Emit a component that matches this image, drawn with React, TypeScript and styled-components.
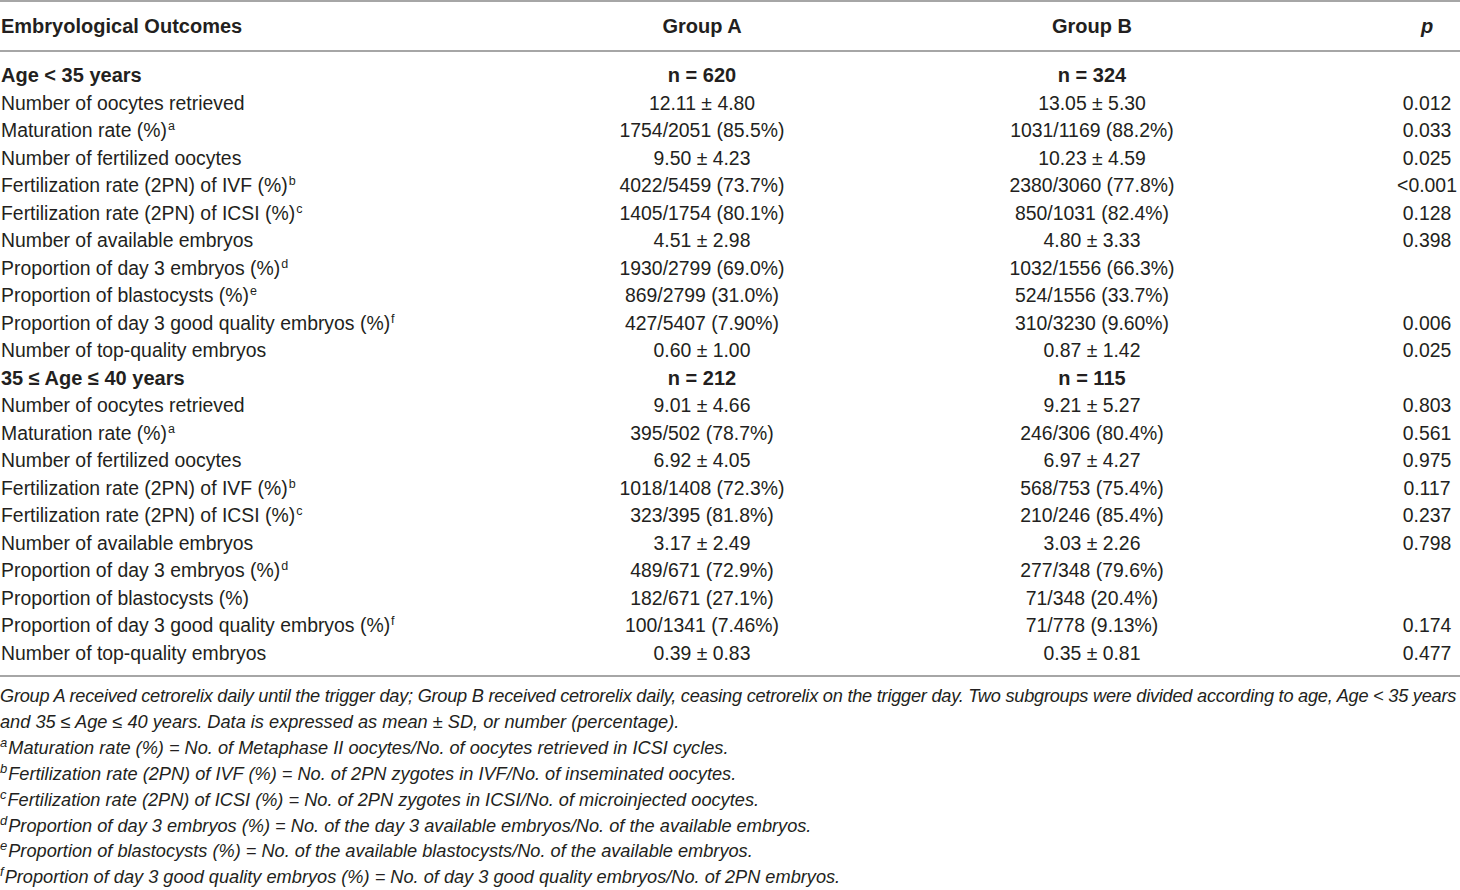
import React from "react";
import styled, { createGlobalStyle } from "styled-components";

const GlobalStyle = createGlobalStyle`
  html, body {
    margin: 0;
    padding: 0;
    background: #fff;
  }
  body {
    font-family: "Liberation Sans", Arial, sans-serif;
    color: #231f20;
  }
`;

const COLS = "507px 390px 390px 173px";

const StyledPage = styled.div`
  width: 1460px;
`;

const StyledTable = styled.div`
  border-top: 2px solid #a6a6a6;
  border-bottom: 2px solid #a6a6a6;
`;

const StyledHead = styled.div`
  display: grid;
  grid-template-columns: ${COLS};
  height: 48px;
  align-items: center;
  border-bottom: 2px solid #a6a6a6;
  font-size: 20px;
  font-weight: bold;
`;

const StyledBody = styled.div`
  padding: 10px 0 8px;
`;

const StyledRow = styled.div<{ $group?: boolean }>`
  display: grid;
  grid-template-columns: ${COLS};
  height: 27.5px;
  align-items: center;
  font-size: ${(p) => (p.$group ? "20px" : "19.4px")};
  font-weight: ${(p) => (p.$group ? "bold" : "normal")};
  white-space: nowrap;
`;

const StyledLabel = styled.div`
  padding-left: 1px;
`;

const StyledValue = styled.div`
  text-align: center;
`;

const StyledP = styled.div<{ $italic?: boolean }>`
  padding-left: 107px;
  text-align: center;
  font-style: ${(p) => (p.$italic ? "italic" : "normal")};
`;

const StyledSup = styled.sup`
  font-size: 12.5px;
  line-height: 0;
  vertical-align: 7px;
  margin-left: 1px;
`;

const StyledNotes = styled.div`
  padding-top: 7px;
  font-size: 18.2px;
  font-style: italic;
  line-height: 25.9px;
`;

const StyledNote = styled.div<{ $tight?: boolean }>`
  white-space: nowrap;
  letter-spacing: ${(p) => (p.$tight ? "-0.24px" : "0")};
`;

const StyledNoteSup = styled.sup`
  font-size: 13px;
  line-height: 0;
  vertical-align: 7px;
  margin-right: 1px;
`;

type Row = { label: string; sup?: string; a: string; b: string; p?: string; group?: boolean };

const rows: Row[] = [
  { label: "Age < 35 years", a: "n = 620", b: "n = 324", group: true },
  { label: "Number of oocytes retrieved", a: "12.11 ± 4.80", b: "13.05 ± 5.30", p: "0.012" },
  { label: "Maturation rate (%)", sup: "a", a: "1754/2051 (85.5%)", b: "1031/1169 (88.2%)", p: "0.033" },
  { label: "Number of fertilized oocytes", a: "9.50 ± 4.23", b: "10.23 ± 4.59", p: "0.025" },
  { label: "Fertilization rate (2PN) of IVF (%)", sup: "b", a: "4022/5459 (73.7%)", b: "2380/3060 (77.8%)", p: "<0.001" },
  { label: "Fertilization rate (2PN) of ICSI (%)", sup: "c", a: "1405/1754 (80.1%)", b: "850/1031 (82.4%)", p: "0.128" },
  { label: "Number of available embryos", a: "4.51 ± 2.98", b: "4.80 ± 3.33", p: "0.398" },
  { label: "Proportion of day 3 embryos (%)", sup: "d", a: "1930/2799 (69.0%)", b: "1032/1556 (66.3%)" },
  { label: "Proportion of blastocysts (%)", sup: "e", a: "869/2799 (31.0%)", b: "524/1556 (33.7%)" },
  { label: "Proportion of day 3 good quality embryos (%)", sup: "f", a: "427/5407 (7.90%)", b: "310/3230 (9.60%)", p: "0.006" },
  { label: "Number of top-quality embryos", a: "0.60 ± 1.00", b: "0.87 ± 1.42", p: "0.025" },
  { label: "35 ≤ Age ≤ 40 years", a: "n = 212", b: "n = 115", group: true },
  { label: "Number of oocytes retrieved", a: "9.01 ± 4.66", b: "9.21 ± 5.27", p: "0.803" },
  { label: "Maturation rate (%)", sup: "a", a: "395/502 (78.7%)", b: "246/306 (80.4%)", p: "0.561" },
  { label: "Number of fertilized oocytes", a: "6.92 ± 4.05", b: "6.97 ± 4.27", p: "0.975" },
  { label: "Fertilization rate (2PN) of IVF (%)", sup: "b", a: "1018/1408 (72.3%)", b: "568/753 (75.4%)", p: "0.117" },
  { label: "Fertilization rate (2PN) of ICSI (%)", sup: "c", a: "323/395 (81.8%)", b: "210/246 (85.4%)", p: "0.237" },
  { label: "Number of available embryos", a: "3.17 ± 2.49", b: "3.03 ± 2.26", p: "0.798" },
  { label: "Proportion of day 3 embryos (%)", sup: "d", a: "489/671 (72.9%)", b: "277/348 (79.6%)" },
  { label: "Proportion of blastocysts (%)", a: "182/671 (27.1%)", b: "71/348 (20.4%)" },
  { label: "Proportion of day 3 good quality embryos (%)", sup: "f", a: "100/1341 (7.46%)", b: "71/778 (9.13%)", p: "0.174" },
  { label: "Number of top-quality embryos", a: "0.39 ± 0.83", b: "0.35 ± 0.81", p: "0.477" },
];

const notes: [string, string][] = [
  ["a", "Maturation rate (%) = No. of Metaphase II oocytes/No. of oocytes retrieved in ICSI cycles."],
  ["b", "Fertilization rate (2PN) of IVF (%) = No. of 2PN zygotes in IVF/No. of inseminated oocytes."],
  ["c", "Fertilization rate (2PN) of ICSI (%) = No. of 2PN zygotes in ICSI/No. of microinjected oocytes."],
  ["d", "Proportion of day 3 embryos (%) = No. of the day 3 available embryos/No. of the available embryos."],
  ["e", "Proportion of blastocysts (%) = No. of the available blastocysts/No. of the available embryos."],
  ["f", "Proportion of day 3 good quality embryos (%) = No. of day 3 good quality embryos/No. of 2PN embryos."],
];

const App: React.FC = () => {
  return (
    <StyledPage>
      <GlobalStyle />
      <StyledTable>
        <StyledHead>
          <StyledLabel>Embryological Outcomes</StyledLabel>
          <StyledValue>Group A</StyledValue>
          <StyledValue>Group B</StyledValue>
          <StyledP $italic>p</StyledP>
        </StyledHead>
        <StyledBody>
          {rows.map((r, i) => (
            <StyledRow key={i} $group={r.group}>
              <StyledLabel>
                {r.label}
                {r.sup && <StyledSup>{r.sup}</StyledSup>}
              </StyledLabel>
              <StyledValue>{r.a}</StyledValue>
              <StyledValue>{r.b}</StyledValue>
              <StyledP>{r.p ?? ""}</StyledP>
            </StyledRow>
          ))}
        </StyledBody>
      </StyledTable>
      <StyledNotes>
        <StyledNote $tight>
          Group A received cetrorelix daily until the trigger day; Group B received cetrorelix daily, ceasing
          cetrorelix on the trigger day. Two subgroups were divided according to age, Age &lt; 35 years
        </StyledNote>
        <StyledNote>and 35 ≤ Age ≤ 40 years. Data is expressed as mean ± SD, or number (percentage).</StyledNote>
        {notes.map(([s, t]) => (
          <StyledNote key={s}>
            <StyledNoteSup>{s}</StyledNoteSup>
            {t}
          </StyledNote>
        ))}
      </StyledNotes>
    </StyledPage>
  );
};

export default App;
